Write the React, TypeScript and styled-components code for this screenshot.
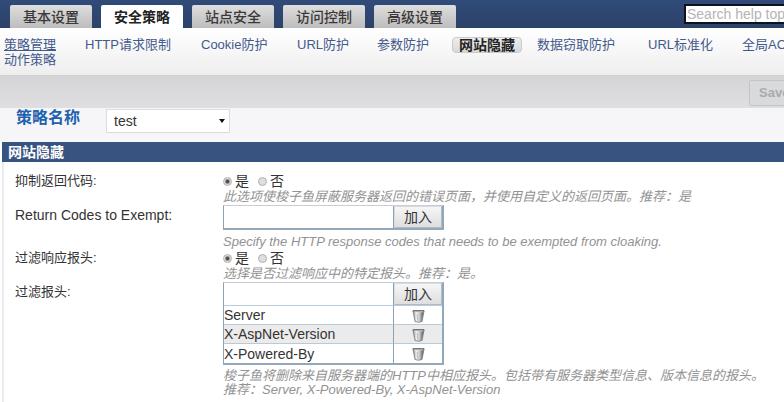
import React from "react";
import styled, { createGlobalStyle } from "styled-components";

const Global = createGlobalStyle`
  * { box-sizing: border-box; }
  body {
    margin: 0;
    background: #fff;
    color: #333;
    font-family: "Liberation Sans", "Noto Sans CJK SC", sans-serif;
    font-size: 13px;
    line-height: 16px;
  }
  button, input, select { font: inherit; color: inherit; margin: 0; }
`;

const Page = styled.div`
  overflow: hidden;
`;

const Header = styled.header`
  display: flex;
  align-items: flex-end;
  height: 28px;
  padding-left: 10px;
  background: linear-gradient(#304b79, #2c4268);
`;

const Tabs = styled.div`
  display: flex;
  gap: 9px;
`;

const Tab = styled.button<{ $active?: boolean }>`
  width: 82px;
  height: 23px;
  padding: 0;
  border: 0;
  border-radius: 2px 2px 0 0;
  font-size: 14px;
  line-height: 20px;
  font-weight: ${(p) => (p.$active ? 700 : 500)};
  color: ${(p) => (p.$active ? "#222" : "#3c3838")};
  background: ${(p) => (p.$active ? "#fff" : "linear-gradient(#dedede, #bdbdbd)")};
`;

const SearchSlot = styled.div`
  width: 100px;
  height: 24px;
  margin-left: auto;
  overflow: hidden;
`;

const Search = styled.input`
  display: block;
  width: 170px;
  height: 20px;
  padding: 0 1px;
  border: 2px solid #0c1222;
  background: #fff;
  font-size: 14px;
  &::placeholder { color: #b4b4b4; opacity: 1; }
`;

const SubNav = styled.nav`
  display: grid;
  grid-template-columns: 81px 116px 96px 80px 75px 85px 111px 94px 1fr;
  grid-auto-rows: 15px;
  align-items: center;
  height: 48px;
  padding: 9px 0 0 4px;
  overflow: hidden;
  white-space: nowrap;
  background: linear-gradient(#fff, #eeeeee);
  border-bottom: 1px solid #cfcfcf;
`;

const NavLink = styled.a<{ $underlined?: boolean }>`
  color: #43598c;
  line-height: 15px;
  text-decoration: ${(p) => (p.$underlined ? "underline" : "none")};
`;

const CurrentLink = styled.a`
  justify-self: start;
  padding: 0 6px;
  border: 1px solid #cacaca;
  border-radius: 4px;
  background: linear-gradient(#ededed, #d9d9d9);
  color: #222;
  font-size: 14px;
  font-weight: 700;
  line-height: 14px;
  text-decoration: none;
`;

const Toolbar = styled.div`
  display: flex;
  justify-content: flex-end;
  height: 32px;
  padding-top: 4px;
  background: linear-gradient(#d4d4d6, #dfdfe1);
`;

const SaveSlot = styled.div`
  width: 35px;
  overflow: hidden;
`;

const SaveButton = styled.button`
  width: 60px;
  height: 26px;
  padding: 0 9px;
  border: 1px solid #c3c5c5;
  border-radius: 2px;
  background: #d8dadb;
  color: #a9abab;
  font-weight: 700;
  text-align: left;
`;

const NameRow = styled.div`
  display: flex;
  align-items: flex-start;
  height: 34px;
  padding: 1px 0 0 16px;
  background: #f6f6f8;
`;

const NameLabel = styled.label`
  width: 90px;
  color: #1f62ae;
  font-size: 16px;
  font-weight: 700;
  line-height: 18px;
`;

const SelectFrame = styled.div`
  display: grid;
  align-items: center;
`;

const NameSelect = styled.select`
  grid-area: 1 / 1;
  width: 124px;
  height: 24px;
  padding: 0 7px;
  border: 1px solid #dcdce0;
  border-radius: 0;
  appearance: none;
  background: #fff;
  font-size: 14px;
`;

const SelectArrow = styled.svg`
  grid-area: 1 / 1;
  justify-self: end;
  margin-right: 5px;
  pointer-events: none;
`;

const Panel = styled.section`
  margin-left: 2px;
  border-left: 2px solid #ebebee;
`;

const PanelTitle = styled.h2`
  margin: 0 0 0 -2px;
  padding-left: 6px;
  height: 20px;
  background: #385380;
  color: #fff;
  font-size: 14px;
  line-height: 20px;
`;

const Form = styled.div`
  padding: 11px 0 8px 11px;
`;

const Field = styled.div`
  display: grid;
  grid-template-columns: 208px 1fr;
`;

const FieldLabel = styled.label<{ $wide?: boolean; $boxed?: boolean }>`
  font-size: ${(p) => (p.$wide ? "14px" : "13px")};
  padding-top: ${(p) => (p.$boxed ? "2px" : "0")};
`;

const RadioGroup = styled.div`
  display: flex;
  gap: 9px;
`;

const RadioLabel = styled.label`
  display: flex;
  align-items: center;
  gap: 3px;
  font-size: 14px;
`;

const Radio = styled.input`
  appearance: none;
  width: 9px;
  height: 9px;
  border: 1px solid #b0b0b0;
  border-radius: 50%;
  background: #dedede;
  &:checked { background: radial-gradient(circle, #484848 0 1px, #dedede 3px); }
`;

const Hint = styled.p<{ $gap?: number; $tight?: boolean }>`
  margin: ${(p) => p.$gap ?? 0}px 0 0;
  color: #929292;
  font-style: italic;
  line-height: ${(p) => (p.$tight ? "14px" : "16px")};
`;

const EntryTable = styled.table`
  width: 221px;
  table-layout: fixed;
  border-collapse: separate;
  border-spacing: 0;
  border: 1px solid #8da3b8;
  border-top-color: #c8ced5;
  border-bottom: 2px solid #93a7bb;
  border-right: 2px solid #93a7bb;
  font-size: 14px;
`;

const EntryCell = styled.td<{ $shaded?: boolean; $last?: boolean }>`
  height: 19px;
  padding: 0;
  border-bottom: ${(p) => (p.$last ? "0" : "1px solid #b9cbd9")};
  background: ${(p) => (p.$shaded ? "#ebebeb" : "#fff")};
  line-height: 16px;
`;

const ActionCell = styled(EntryCell)`
  width: 49px;
  border-left: 1px solid #86a3ba;
  text-align: center;
`;

const EntryInput = styled.input`
  display: block;
  width: 100%;
  height: 22px;
  padding: 0 2px;
  border: 0;
  background: #fff;
`;

const AddButton = styled.button`
  display: block;
  width: 100%;
  height: 22px;
  padding: 0;
  border: 1px solid #d8dbdf;
  border-right-color: #b4bac2;
  border-bottom-color: #b4bac2;
  background: linear-gradient(#f6f6f6, #dedede);
  line-height: 16px;
`;

const IconButton = styled.button`
  display: block;
  height: 16px;
  margin: 0 auto;
  padding: 1px 0 0;
  border: 0;
  background: none;
`;

function TrashIcon() {
  return (
    <svg width="13" height="14" viewBox="0 0 13 14" aria-hidden="true" display="block">
      <defs>
        <linearGradient id="can" x1="0" x2="1">
          <stop offset="0" stopColor="#8a8a8a" />
          <stop offset="0.3" stopColor="#f0f0f0" />
          <stop offset="0.6" stopColor="#c8c8c8" />
          <stop offset="0.85" stopColor="#777" />
          <stop offset="1" stopColor="#666" />
        </linearGradient>
      </defs>
      <path d="M1 2 L3 12.500 Q6.500 14 10 12.500 L12 2 Z" fill="url(#can)" />
      <path d="M1 2 L3 12.500 Q6.500 14 10 12.500 L12 2" fill="none" stroke="#777" strokeWidth="0.8" />
      <path d="M5.200 5 L5.600 11.500" stroke="#b5b5b5" strokeWidth="0.8" />
      <rect x="0.500" y="1" width="12" height="2" rx="1" fill="#777" />
      <path d="M2 2.800 H11" stroke="#ddd" strokeWidth="0.8" />
    </svg>
  );
}

function YesNo({ name, label }: { name: string; label: string }) {
  return (
    <RadioGroup role="radiogroup" aria-label={label}>
      <RadioLabel>
        <Radio type="radio" name={name} defaultChecked />是
      </RadioLabel>
      <RadioLabel>
        <Radio type="radio" name={name} />否
      </RadioLabel>
    </RadioGroup>
  );
}

function EntryList({ id, items = [] }: { id: string; items?: string[] }) {
  return (
    <EntryTable>
      <tbody>
        <tr>
          <EntryCell $last={items.length === 0}>
            <EntryInput id={id} type="text" />
          </EntryCell>
          <ActionCell $last={items.length === 0}>
            <AddButton type="button">加入</AddButton>
          </ActionCell>
        </tr>
        {items.map((item, i) => (
          <tr key={item}>
            <EntryCell $shaded={i % 2 === 1} $last={i === items.length - 1}>{item}</EntryCell>
            <ActionCell $shaded={i % 2 === 1} $last={i === items.length - 1}>
              <IconButton type="button" aria-label={`Delete ${item}`}>
                <TrashIcon />
              </IconButton>
            </ActionCell>
          </tr>
        ))}
      </tbody>
    </EntryTable>
  );
}

const tabs = ["基本设置", "安全策略", "站点安全", "访问控制", "高级设置"];
const links = ["策略管理", "HTTP请求限制", "Cookie防护", "URL防护", "参数防护", "网站隐藏", "数据窃取防护", "URL标准化", "全局ACL", "动作策略"];
const headers = ["Server", "X-AspNet-Version", "X-Powered-By"];

export default function App() {
  return (
    <Page>
      <Global />
      <Header>
        <Tabs>
          {tabs.map((tab) => (
            <Tab key={tab} type="button" $active={tab === "安全策略"}>{tab}</Tab>
          ))}
        </Tabs>
        <SearchSlot>
          <Search type="text" aria-label="Search help topics" placeholder="Search help topics" />
        </SearchSlot>
      </Header>
      <SubNav>
        {links.map((link) =>
          link === "网站隐藏" ? (
            <CurrentLink key={link} href="#" aria-current="page">{link}</CurrentLink>
          ) : (
            <NavLink key={link} href="#" $underlined={link === "策略管理"}>{link}</NavLink>
          )
        )}
      </SubNav>
      <Toolbar>
        <SaveSlot>
          <SaveButton type="button" disabled>Save</SaveButton>
        </SaveSlot>
      </Toolbar>
      <NameRow>
        <NameLabel htmlFor="policy">策略名称</NameLabel>
        <SelectFrame>
          <NameSelect id="policy" defaultValue="test">
            <option value="test">test</option>
          </NameSelect>
          <SelectArrow width="6" height="4" viewBox="0 0 6 4" aria-hidden="true">
            <path d="M0 0 H6 L3 4 Z" fill="#111" />
          </SelectArrow>
        </SelectFrame>
      </NameRow>
      <Panel>
        <PanelTitle>网站隐藏</PanelTitle>
        <Form>
          <Field>
            <FieldLabel as="span">抑制返回代码:</FieldLabel>
            <div>
              <YesNo name="suppress" label="抑制返回代码" />
              <Hint>此选项使梭子鱼屏蔽服务器返回的错误页面，并使用自定义的返回页面。推荐：是</Hint>
            </div>
          </Field>
          <Field>
            <FieldLabel htmlFor="codes" $wide $boxed>Return Codes to Exempt:</FieldLabel>
            <div>
              <EntryList id="codes" />
              <Hint $gap={4}>Specify the HTTP response codes that needs to be exempted from cloaking.</Hint>
            </div>
          </Field>
          <Field>
            <FieldLabel as="span">过滤响应报头:</FieldLabel>
            <div>
              <YesNo name="filter" label="过滤响应报头" />
              <Hint>选择是否过滤响应中的特定报头。推荐：是。</Hint>
            </div>
          </Field>
          <Field>
            <FieldLabel htmlFor="headers" $boxed>过滤报头:</FieldLabel>
            <div>
              <EntryList id="headers" items={headers} />
              <Hint $gap={4} $tight>
                梭子鱼将删除来自服务器端的HTTP中相应报头。包括带有服务器类型信息、版本信息的报头。
                <br />
                推荐：Server, X-Powered-By, X-AspNet-Version
              </Hint>
            </div>
          </Field>
        </Form>
      </Panel>
    </Page>
  );
}
